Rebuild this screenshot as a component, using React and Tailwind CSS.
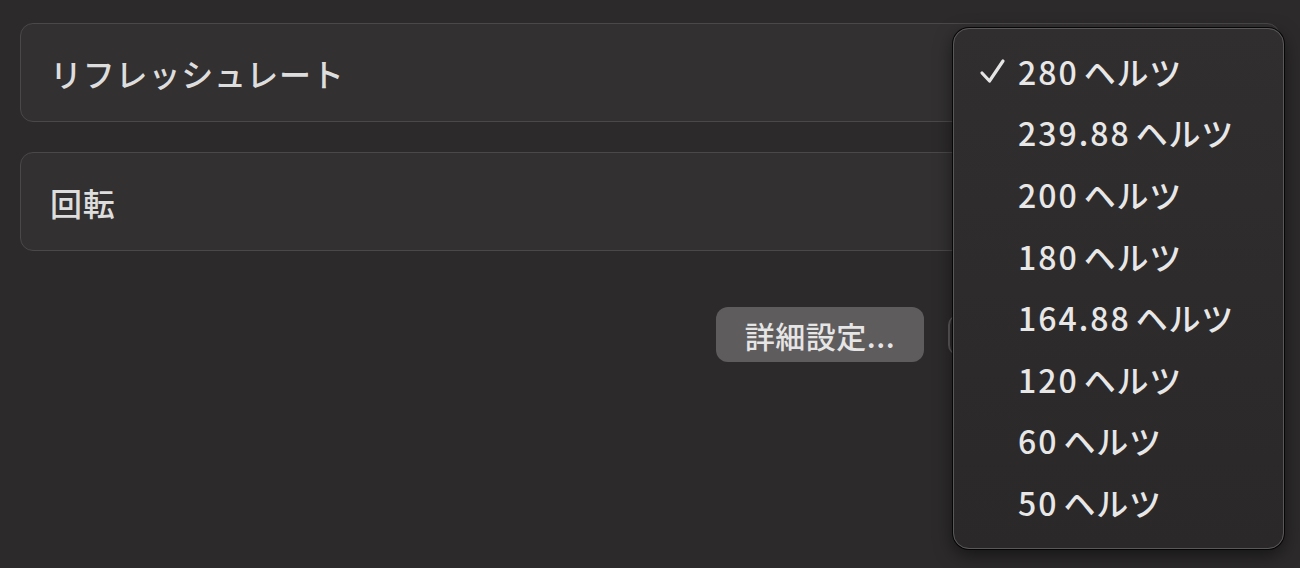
import React from "react";

const RATES = ["280", "239.88", "200", "180", "164.88", "120", "60", "50"];

const font = { fontFamily: '"Noto Sans CJK JP", "Noto Sans", sans-serif' };

const SettingRow = ({ label }) => (
  <div className="h-[99px] rounded-[13px] border border-[#4a4849] bg-[#323031] flex items-center pl-[29px]">
    <span className="text-[32px] font-medium tracking-[0.8px] text-[#dedddd] leading-none">{label}</span>
  </div>
);

const Check = () => (
  <svg width="30" height="30" viewBox="0 0 30 30" className="text-[#e6e5e5]">
    <path d="M4 17 L11.5 25 L25 5" fill="none" stroke="currentColor" strokeWidth="3.2" strokeLinecap="round" strokeLinejoin="round" />
  </svg>
);

const RateMenu = ({ selected = "280" }) => (
  <div className="absolute left-[953px] top-[28px] w-[331px] h-[521px] rounded-[16px] border border-[#5a5859] bg-gradient-to-b from-[#302e2f] to-[#2a2829] ring-1 ring-black/80 shadow-[0_6px_18px_rgba(0,0,0,0.5)] pt-[11px] pb-[15px]">
    {RATES.map((r) => (
      <div key={r} className="h-[61.6px] flex items-center">
        <div className="w-[64px] flex justify-end pr-[10px]">
          {r === selected && <Check />}
        </div>
        <span className="text-[32px] font-medium leading-none text-[#e8e7e7] whitespace-nowrap">
          <span className="tracking-[2px]">{r}</span>
          <span className="ml-[5px] tracking-[0.8px]">ヘルツ</span>
        </span>
      </div>
    ))}
  </div>
);

export default function App() {
  return (
    <div className="relative w-full h-[568px] bg-[#2c2a2b] overflow-hidden px-[20px] pt-[23px]" style={font}>
      <div className="flex flex-col gap-[30px]">
        <SettingRow label="リフレッシュレート" />
        <SettingRow label="回転" />
      </div>

      {/* Buttons; the second one sits behind the menu */}
      <div className="flex justify-end items-center gap-[24px] mt-[56px]">
        <button className="h-[55px] w-[208px] rounded-[12px] bg-[#5e5c5d] text-[30px] font-medium tracking-[0.5px] text-[#e6e5e5] leading-none">
          詳細設定...
        </button>
        <div className="h-[40px] w-[332px] rounded-[10px] border-l-2 border-[#5a5859] bg-[#2c2a2b]" />
      </div>

      <RateMenu />
    </div>
  );
}
